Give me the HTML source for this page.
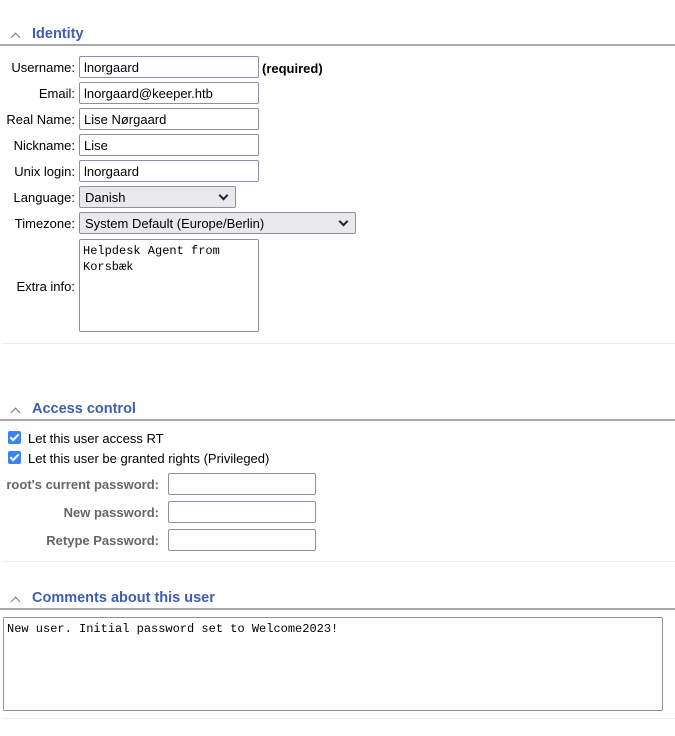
<!DOCTYPE html>
<html><head><style>
body{margin:0;width:675px;height:736px;background:#fff;font-family:"Liberation Sans",sans-serif;font-size:13px;color:#000;position:relative;overflow:hidden}
.a{position:absolute}
.h{position:absolute;left:32px;font-size:14.5px;font-weight:bold;color:#3d5fae}
.chev{position:absolute;left:12px;width:6px;height:6px;border-left:1.5px solid #777;border-top:1.5px solid #777;transform:rotate(45deg)}
.line{position:absolute;left:0;width:675px;height:2px;background:#aaa}
.sep{position:absolute;left:2px;width:673px;height:1px;background:#eee}
.lab{position:absolute;right:600px;text-align:right;white-space:nowrap}
.in{position:absolute;box-sizing:border-box;border:1px solid #8f8f9d;border-radius:2px;background:#fff;padding:3px 4px;height:22px;white-space:nowrap}
.sel{background:#e9e9ed}
.arr{position:absolute;right:8px;top:5px;width:5px;height:5px;border-right:2px solid #222;border-bottom:2px solid #222;transform:rotate(45deg)}
.cb{position:absolute;left:8px;width:13px;height:13px;background:#3b82f6;border-radius:2px}
.cb:after{content:"";position:absolute;left:4px;top:1px;width:3px;height:7px;border-right:2px solid #fff;border-bottom:2px solid #fff;transform:rotate(45deg)}
.pl{position:absolute;right:516px;font-weight:bold;color:#666;text-align:right;white-space:nowrap}
.mono{font-family:"Liberation Mono",monospace;font-size:12px;line-height:16px}
</style></head><body>
<div class="chev" style="top:34px"></div><div class="h" style="top:26px">Identity</div><div class="line" style="top:44px"></div>
<div class="lab" style="top:60px">Username:</div><div class="in" style="left:79px;top:56px;width:180px">lnorgaard</div><div class="a" style="left:262px;top:61px;font-weight:bold">(required)</div>
<div class="lab" style="top:86px">Email:</div><div class="in" style="left:79px;top:82px;width:180px">lnorgaard@keeper.htb</div>
<div class="lab" style="top:112px">Real Name:</div><div class="in" style="left:79px;top:108px;width:180px">Lise Nørgaard</div>
<div class="lab" style="top:138px">Nickname:</div><div class="in" style="left:79px;top:134px;width:180px">Lise</div>
<div class="lab" style="top:164px">Unix login:</div><div class="in" style="left:79px;top:160px;width:180px">lnorgaard</div>
<div class="lab" style="top:190px">Language:</div><div class="in sel" style="left:79px;top:186px;width:157px;padding-left:5px">Danish<div class="arr"></div></div>
<div class="lab" style="top:216px">Timezone:</div><div class="in sel" style="left:79px;top:212px;width:277px;padding-left:5px">System Default (Europe/Berlin)<div class="arr"></div></div>
<div class="lab" style="top:279px">Extra info:</div><div class="in mono" style="left:79px;top:239px;width:180px;height:93px;white-space:normal;padding:3px 3px">Helpdesk Agent from Korsbæk</div>
<div class="sep" style="top:343px"></div>

<div class="chev" style="top:409px"></div><div class="h" style="top:401px">Access control</div><div class="line" style="top:419px"></div>
<div class="cb" style="top:431px"></div><div class="a" style="left:28px;top:431px">Let this user access RT</div>
<div class="cb" style="top:451px"></div><div class="a" style="left:28px;top:451px">Let this user be granted rights (Privileged)</div>
<div class="pl" style="top:477px">root's current password:</div><div class="in" style="left:168px;top:473px;width:148px"></div>
<div class="pl" style="top:505px">New password:</div><div class="in" style="left:168px;top:501px;width:148px"></div>
<div class="pl" style="top:533px">Retype Password:</div><div class="in" style="left:168px;top:529px;width:148px"></div>
<div class="sep" style="top:561px"></div>

<div class="chev" style="top:598px"></div><div class="h" style="top:590px">Comments about this user</div><div class="line" style="top:608px"></div>
<div class="in mono" style="left:3px;top:617px;width:660px;height:94px;padding:3px 3px">New user. Initial password set to Welcome2023!</div>
<div class="sep" style="top:718px"></div>
</body></html>
